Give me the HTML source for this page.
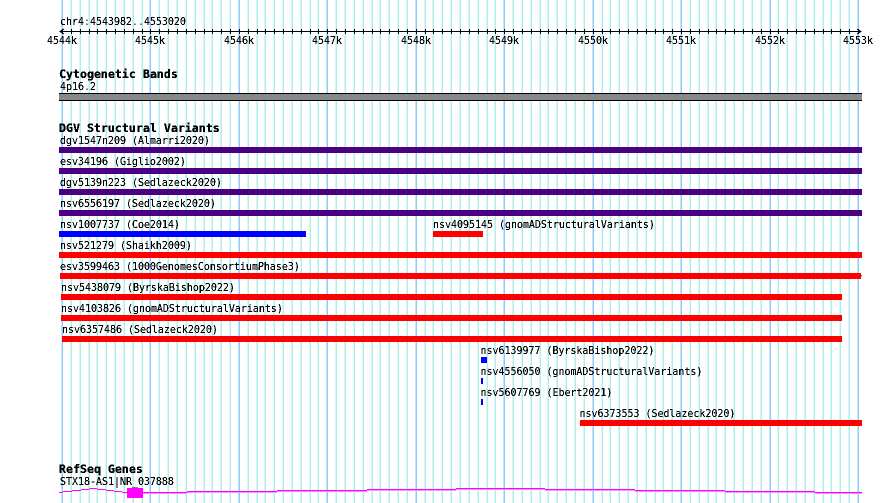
<!DOCTYPE html>
<html><head><meta charset="utf-8">
<style>
html,body{margin:0;padding:0;background:#fff;width:890px;height:503px;overflow:hidden}
svg{display:block;position:absolute;left:0;top:0}
text{font-family:"DejaVu Sans Mono",monospace;font-size:9.97px;fill:#000}
.b{font-weight:bold;font-size:11.62px}
</style></head><body>
<svg width="890" height="503" viewBox="0 0 890 503" shape-rendering="crispEdges">
<defs>
<filter id="t" x="0" y="0" width="100%" height="100%" filterUnits="objectBoundingBox" color-interpolation-filters="sRGB"><feComponentTransfer><feFuncA type="discrete" tableValues="0 0 0 1 1 1 1 1 1"/></feComponentTransfer></filter>
<filter id="tb" x="0" y="0" width="100%" height="100%" filterUnits="objectBoundingBox" color-interpolation-filters="sRGB"><feComponentTransfer><feFuncA type="discrete" tableValues="0 1 1 1"/></feComponentTransfer></filter>
</defs>
<g id="grid"></g>
<rect x="60" y="31" width="800" height="1" fill="#000"/>
<path d="M64 29L60 31.5L64 34M857 29L861 31.5L857 34" fill="none" stroke="#000" stroke-width="1" shape-rendering="auto"/>
<g id="ticks"></g>
<rect x="59" y="93" width="803" height="8" fill="#000"/><rect x="59" y="94" width="803" height="6" fill="#888"/>
<g fill="#4b0082"><rect x="59" y="147" width="803" height="6"/><rect x="59" y="168" width="803" height="6"/><rect x="59" y="189" width="803" height="6"/><rect x="59" y="210" width="803" height="6"/></g>
<rect x="59" y="231" width="247" height="6" fill="#00f"/>
<g fill="#f00"><rect x="433" y="231" width="50" height="6"/><rect x="59" y="252" width="803" height="6"/><rect x="60" y="273" width="801" height="6"/><rect x="861" y="275" width="1" height="1"/><rect x="61" y="294" width="781" height="6"/><rect x="61" y="315" width="781" height="6"/><rect x="62" y="336" width="780" height="6"/><rect x="580" y="420" width="282" height="6"/></g>
<g fill="#00f"><rect x="481" y="357" width="6" height="6"/><rect x="481" y="378" width="2" height="6"/><rect x="481" y="399" width="2" height="6"/></g>
<g fill="#f0f"><rect x="59" y="492" width="4" height="1"/><rect x="63" y="491" width="9" height="1"/><rect x="72" y="490" width="9" height="1"/><rect x="81" y="489" width="8" height="1"/><rect x="89" y="488" width="8" height="1"/><rect x="97" y="489" width="9" height="1"/><rect x="106" y="490" width="8" height="1"/><rect x="114" y="491" width="8" height="1"/><rect x="122" y="492" width="5" height="1"/><rect x="127" y="488" width="16" height="10"/><rect x="143" y="492" width="44" height="1"/><rect x="187" y="491" width="90" height="1"/><rect x="277" y="490" width="90" height="1"/><rect x="367" y="489" width="89" height="1"/><rect x="456" y="488" width="89" height="1"/><rect x="545" y="489" width="90" height="1"/><rect x="635" y="490" width="90" height="1"/><rect x="725" y="491" width="90" height="1"/><rect x="815" y="492" width="47" height="1"/></g>
<g fill="#ff90ff"><rect x="143" y="493" width="44" height="1"/><rect x="187" y="492" width="90" height="1"/><rect x="277" y="491" width="90" height="1"/><rect x="367" y="490" width="89" height="1"/><rect x="456" y="489" width="89" height="1"/><rect x="545" y="490" width="90" height="1"/><rect x="635" y="491" width="90" height="1"/><rect x="725" y="492" width="90" height="1"/><rect x="815" y="493" width="47" height="1"/></g>
<g filter="url(#tb)">
<text class="b" x="59" y="78">Cytogenetic Bands</text>
<text class="b" x="59" y="132">DGV Structural Variants</text>
<text class="b" x="59" y="473">RefSeq Genes</text>
</g>
<g filter="url(#t)">
<text transform="translate(60 25) scale(1 1.1)">chr4:4543982..4553020</text>
<text transform="translate(47 44) scale(1 1.1)">4544k</text><text transform="translate(135 44) scale(1 1.1)">4545k</text><text transform="translate(224 44) scale(1 1.1)">4546k</text><text transform="translate(312 44) scale(1 1.1)">4547k</text><text transform="translate(401 44) scale(1 1.1)">4548k</text><text transform="translate(489 44) scale(1 1.1)">4549k</text><text transform="translate(578 44) scale(1 1.1)">4550k</text><text transform="translate(666 44) scale(1 1.1)">4551k</text><text transform="translate(755 44) scale(1 1.1)">4552k</text><text transform="translate(843 44) scale(1 1.1)">4553k</text>
<text transform="translate(60 90) scale(1 1.1)">4p16.2</text>
<text transform="translate(60 144) scale(1 1.1)">dgv1547n209 (Almarri2020)</text>
<text transform="translate(60 165) scale(1 1.1)">esv34196 (Giglio2002)</text>
<text transform="translate(60 186) scale(1 1.1)">dgv5139n223 (Sedlazeck2020)</text>
<text transform="translate(60 207) scale(1 1.1)">nsv6556197 (Sedlazeck2020)</text>
<text transform="translate(60 228) scale(1 1.1)">nsv1007737 (Coe2014)</text>
<text transform="translate(433 228) scale(1 1.1)">nsv4095145 (gnomADStructuralVariants)</text>
<text transform="translate(60 249) scale(1 1.1)">nsv521279 (Shaikh2009)</text>
<text transform="translate(60 270) scale(1 1.1)">esv3599463 (1000GenomesConsortiumPhase3)</text>
<text transform="translate(61 291) scale(1 1.1)">nsv5438079 (ByrskaBishop2022)</text>
<text transform="translate(61 312) scale(1 1.1)">nsv4103826 (gnomADStructuralVariants)</text>
<text transform="translate(62 333) scale(1 1.1)">nsv6357486 (Sedlazeck2020)</text>
<text transform="translate(480.5 354) scale(1 1.1)">nsv6139977 (ByrskaBishop2022)</text>
<text transform="translate(480.5 375) scale(1 1.1)">nsv4556050 (gnomADStructuralVariants)</text>
<text transform="translate(480.5 396) scale(1 1.1)">nsv5607769 (Ebert2021)</text>
<text transform="translate(579.5 417) scale(1 1.1)">nsv6373553 (Sedlazeck2020)</text>
<text transform="translate(60 485) scale(1 1.1)">STX18-AS1|NR_037888</text>
</g>
</svg>
<script>
var g='',t='';
for(var i=0;i<=90;i++){var x=Math.round(62+i*8.8444);
 g+='<rect x="'+x+'" y="0" width="1" height="503" fill="'+(i%10==0?'#87cefa':'#afeeee')+'"/>';
 g+='<rect x="'+(x-1)+'" y="0" width="1" height="503" fill="'+(i%10==0?'#c3e6fc':'#d7f6f6')+'"/>';
 t+='<rect x="'+x+'" y="29" width="1" height="5" fill="#000"/>';}
document.getElementById('grid').innerHTML=g;document.getElementById('ticks').innerHTML=t;
</script>
</body></html>
